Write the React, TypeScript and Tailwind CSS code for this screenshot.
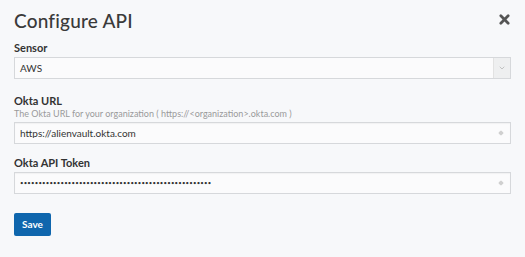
import { ChevronDown } from "lucide-react";

const font = { fontFamily: "Lato, 'Open Sans', sans-serif" };

function FieldLabel({ children, className = "" }: { children: string; className?: string }) {
  return (
    <div className={`text-[11px] font-bold leading-[14px] text-[#333] ${className}`}>{children}</div>
  );
}

function TextInput({
  value,
  className = "",
  textClass = "text-[10px]",
}: {
  value: string;
  className?: string;
  textClass?: string;
}) {
  return (
    <div
      className={`flex h-[22px] items-center justify-between border border-[#d6d8db] bg-[#fbfbfc] pl-[5px] pr-[7px] shadow-[inset_0_1px_1px_rgba(0,0,0,0.04)] ${className}`}
    >
      <span className={`truncate leading-none text-[#333] ${textClass}`}>{value}</span>
      <span className="h-[4px] w-[4px] rotate-45 rounded-[1px] bg-[#d0d0d0]" />
    </div>
  );
}

export default function App() {
  return (
    <div className="h-[257px] w-[525px] bg-[#f7f8fa] px-[14px] pt-[10px]" style={font}>
      <div className="flex items-start justify-between">
        <h1 className="text-[19px] font-medium leading-[22px] tracking-[0.2px] text-[#3a3a3a]">
          Configure API
        </h1>
        <svg width="11" height="11" viewBox="0 0 12 12" className="mr-[1px] mt-[4px]">
          <path d="M2 2 L10 10 M10 2 L2 10" stroke="#555" strokeWidth="3" strokeLinecap="round" />
        </svg>
      </div>

      <FieldLabel className="mt-[9px]">Sensor</FieldLabel>
      <div className="mt-[2px] flex h-[22px] items-stretch border border-[#d6d8db] bg-[#fbfbfc]">
        <span className="flex flex-1 items-center pl-[5px] text-[10px] text-[#333]">AWS</span>
        <span className="flex w-[17px] items-center justify-center border-l border-[#e2e2e2] bg-[#eeeff0]">
          <ChevronDown size={8} strokeWidth={2} className="text-[#aaa]" />
        </span>
      </div>

      <FieldLabel className="mt-[15px]">Okta URL</FieldLabel>
      <div className="text-[9px] leading-[11px] text-[#9a9a9a]">
        The Okta URL for your organization ( https://&lt;organization&gt;.okta.com )
      </div>
      <TextInput className="mt-[3px]" value="https://alienvault.okta.com" />

      <FieldLabel className="mt-[12px]">Okta API Token</FieldLabel>
      <TextInput
        className="mt-[2px]"
        textClass="text-[6px] tracking-[0.2px]"
        value={"•".repeat(52)}
      />

      <button className="mt-[19px] h-[23px] w-[37px] rounded-[2px] bg-[#0f66ad] text-[10px] font-bold text-white">
        Save
      </button>
    </div>
  );
}
